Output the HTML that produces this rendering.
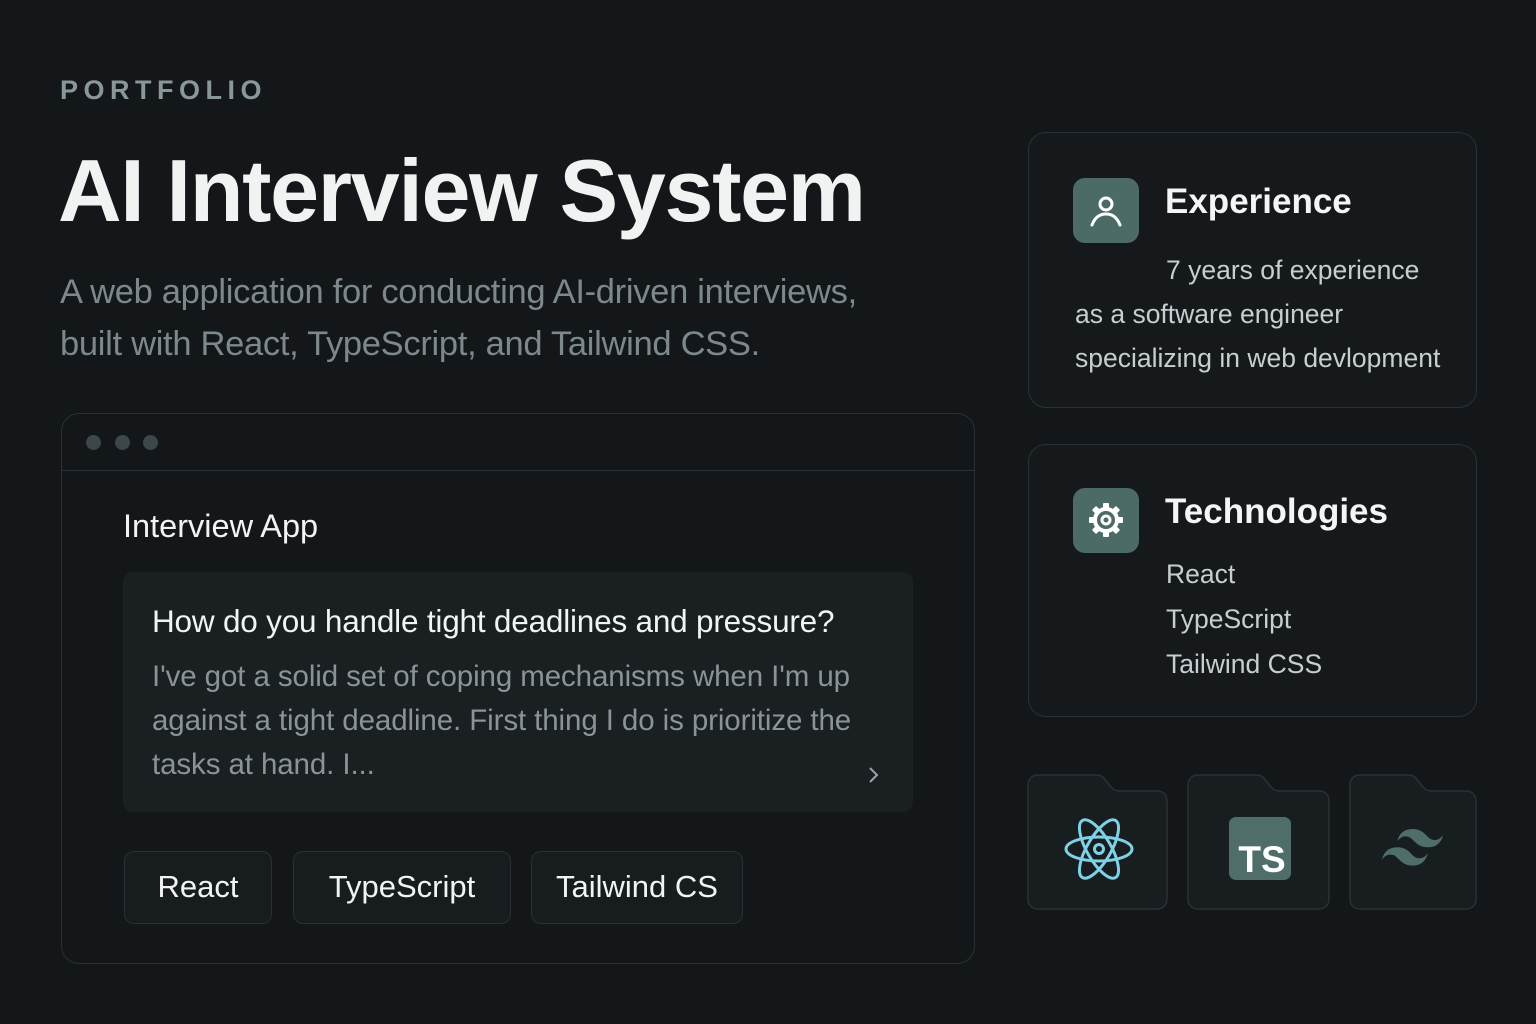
<!DOCTYPE html>
<html><head><meta charset="utf-8"><style>
*{margin:0;padding:0;box-sizing:border-box}
body{width:1536px;height:1024px;background:#131719;font-family:"Liberation Sans",sans-serif;position:relative;overflow:hidden;color:#eef1f1}
.a{position:absolute;white-space:nowrap}
.card{position:absolute;border:1.5px solid #2a3134;border-radius:18px;background:#15191c}
.ic{position:absolute;width:66px;height:65px;border-radius:12px;background:#4c6b66}
.chip{position:absolute;top:851px;height:73px;border:1.5px solid #2a3134;border-radius:10px;background:#171c1e;font-size:31px;line-height:70px;text-align:center;color:#f2f4f4}
</style></head><body>
<div class="a" style="left:60px;top:75px;font-size:27px;font-weight:bold;letter-spacing:5.5px;color:#8a9799">PORTFOLIO</div>
<div class="a" style="left:58px;top:140px;font-size:88px;font-weight:bold;letter-spacing:-1.3px;color:#f1f3f3">AI Interview System</div>
<div class="a" style="left:60px;top:266px;font-size:34.5px;line-height:52px;letter-spacing:-0.3px;color:#7d888a">A web application for conducting AI-driven interviews,<br>built with React, TypeScript, and Tailwind CSS.</div>

<div class="card" style="left:61px;top:413px;width:914px;height:551px;background:#131719">
 <div style="height:57px;border-bottom:1.5px solid #2a3134;position:relative">
  <div class="a" style="left:24px;top:21px;width:15px;height:15px;border-radius:50%;background:#3d4749"></div>
  <div class="a" style="left:53px;top:21px;width:15px;height:15px;border-radius:50%;background:#3d4749"></div>
  <div class="a" style="left:81px;top:21px;width:15px;height:15px;border-radius:50%;background:#3d4749"></div>
 </div>
</div>
<div class="a" style="left:123px;top:508px;font-size:32.5px;color:#f2f4f4">Interview App</div>
<div class="a" style="left:123px;top:572px;width:790px;height:240px;border-radius:10px;background:#1a1f21"></div>
<div class="a" style="left:152px;top:603px;font-size:31.5px;letter-spacing:-0.2px;color:#f2f4f4">How do you handle tight deadlines and pressure?</div>
<div class="a" style="left:152px;top:655px;font-size:29.5px;line-height:44px;letter-spacing:-0.1px;color:#8a9496">I've got a solid set of coping mechanisms when I'm up<br>against a tight deadline. First thing I do is prioritize the<br>tasks at hand. I...</div>
<svg class="a" style="left:866px;top:765px" width="16" height="20"><path d="M4 3l7 7-7 7" stroke="#9aa3a5" stroke-width="2" fill="none"/></svg>
<div class="chip" style="left:124px;width:148px">React</div>
<div class="chip" style="left:293px;width:218px">TypeScript</div>
<div class="chip" style="left:531px;width:212px">Tailwind CS</div>

<div class="card" style="left:1028px;top:132px;width:449px;height:276px"></div>
<div class="ic" style="left:1073px;top:178px"><svg width="66" height="65"><circle cx="33" cy="26" r="6" stroke="#fff" stroke-width="3" fill="none"/><path d="M19 47c3-8 8-11 14-11s11 3 14 11" stroke="#fff" stroke-width="3" fill="none" stroke-linecap="round"/></svg></div>
<div class="a" style="left:1165px;top:182px;font-size:35px;font-weight:bold;color:#f4f6f6">Experience</div>
<div class="a" style="left:1166px;top:248px;font-size:26.5px;line-height:44px;color:#c8cecf">7 years of experience</div>
<div class="a" style="left:1075px;top:292px;font-size:26.5px;line-height:44px;color:#c8cecf">as a software engineer<br>specializing in web devlopment</div>

<div class="card" style="left:1028px;top:444px;width:449px;height:273px"></div>
<div class="ic" style="left:1073px;top:488px"><svg width="66" height="65"><g transform="translate(33 32)" fill="#fff"><g id="t"><rect x="-3" y="-17" width="6" height="7" rx="1"/></g><use href="#t" transform="rotate(45)"/><use href="#t" transform="rotate(90)"/><use href="#t" transform="rotate(135)"/><use href="#t" transform="rotate(180)"/><use href="#t" transform="rotate(225)"/><use href="#t" transform="rotate(270)"/><use href="#t" transform="rotate(315)"/><circle r="11" fill="none" stroke="#fff" stroke-width="4"/><circle r="4" fill="none" stroke="#fff" stroke-width="3"/></g></svg></div>
<div class="a" style="left:1165px;top:492px;font-size:35px;font-weight:bold;color:#f4f6f6">Technologies</div>
<div class="a" style="left:1166px;top:552px;font-size:26.5px;line-height:45px;color:#c8cecf">React<br>TypeScript<br>Tailwind CSS</div>

<svg class="a" style="left:0;top:0" width="1536" height="1024">
 <g fill="#181d1f" stroke="#2a3134" stroke-width="1.5">
  <path d="M1038 775h58c6 0 8 3 11 7l4 5c3 3 5 4 9 4h37c6 0 10 4 10 10v98c0 6-4 10-10 10h-119c-6 0-10-4-10-10v-114c0-6 4-10 10-10z"/>
  <path d="M1198 775h58c6 0 8 3 11 7l4 5c3 3 5 4 9 4h39c6 0 10 4 10 10v98c0 6-4 10-10 10h-121c-6 0-10-4-10-10v-114c0-6 4-10 10-10z"/>
  <path d="M1360 775h48c6 0 8 3 11 7l4 5c3 3 5 4 9 4h34c6 0 10 4 10 10v98c0 6-4 10-10 10h-106c-6 0-10-4-10-10v-114c0-6 4-10 10-10z"/>
 </g>
 <g transform="translate(1099 849)" stroke="#7fd1e6" stroke-width="3" fill="none">
  <ellipse rx="33" ry="12"/><ellipse rx="33" ry="12" transform="rotate(60)"/><ellipse rx="33" ry="12" transform="rotate(120)"/><circle r="4.5"/>
 </g>
 <rect x="1229" y="817" width="62" height="63" rx="7" fill="#4f6e69"/>
 <text x="1262" y="872" font-family="Liberation Sans" font-weight="bold" font-size="37" fill="#fff" text-anchor="middle">TS</text>
 <path transform="translate(1382 829) scale(1.13)" fill="#4f6e69" d="M27 0c-7.2 0-11.7 3.6-13.5 10.8 2.7-3.6 5.85-4.95 9.45-4.05 2.054.513 3.522 2.004 5.147 3.653C30.744 13.09 33.808 16.2 40.5 16.2c7.2 0 11.7-3.6 13.5-10.8-2.7 3.6-5.850 4.95-9.45 4.05-2.054-.513-3.522-2.004-5.147-3.653C36.756 3.110 33.692 0 27 0zM13.5 16.2C6.3 16.2 1.8 19.8 0 27c2.7-3.6 5.85-4.95 9.45-4.05 2.054.514 3.522 2.004 5.147 3.653C17.244 29.29 20.308 32.4 27 32.4c7.2 0 11.7-3.6 13.5-10.8-2.7 3.6-5.85 4.95-9.45 4.05-2.054-.513-3.522-2.004-5.147-3.653C23.256 19.31 20.192 16.2 13.5 16.2z"/>
</svg>
</body></html>
